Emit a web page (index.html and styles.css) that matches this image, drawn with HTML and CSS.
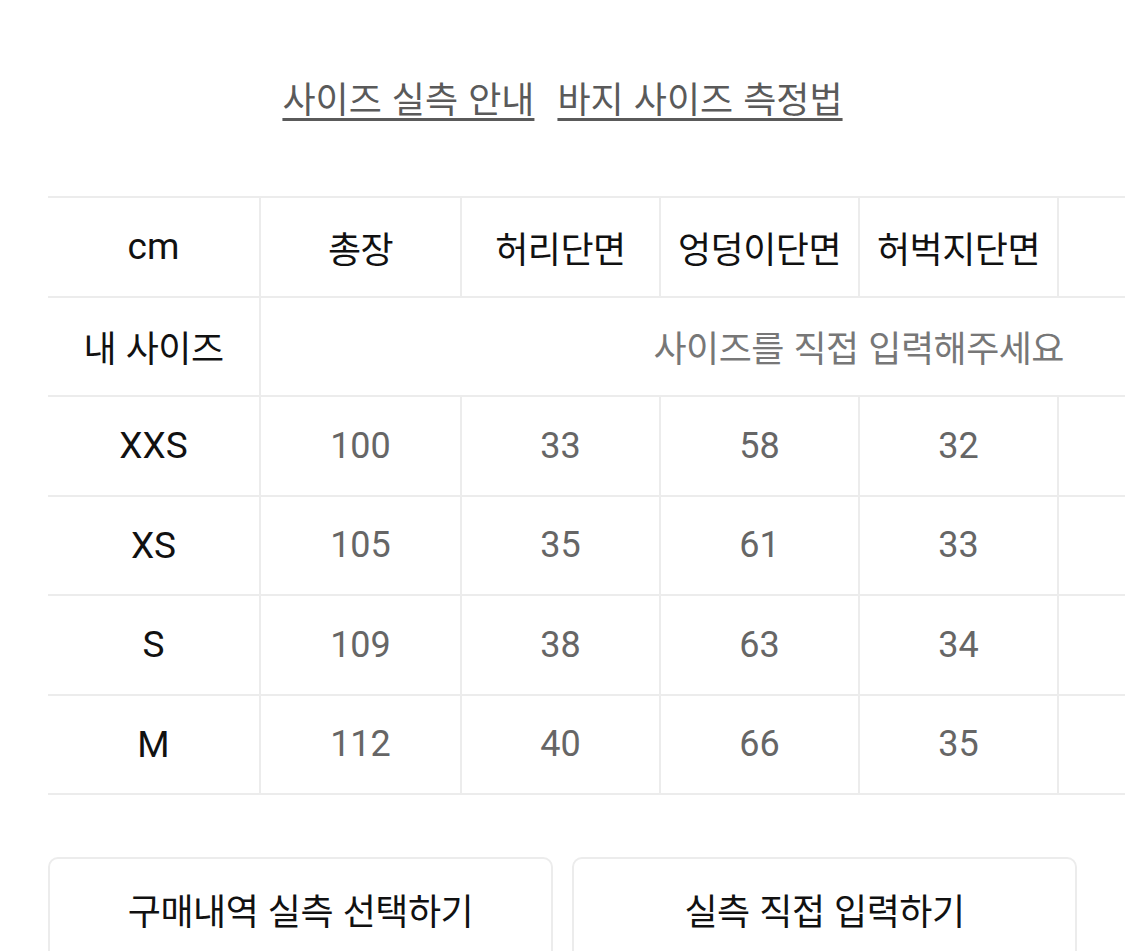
FILE: index.html
```html
<!DOCTYPE html>
<html lang="ko">
<head>
<meta charset="utf-8">
<title>사이즈</title>
<link rel="stylesheet" href="styles.css">
</head>
<body>
<div class="page">
  <nav class="guide-links">
    <a class="guide-link" href="#">사이즈 실측 안내</a>
    <a class="guide-link" href="#">바지 사이즈 측정법</a>
  </nav>

  <div class="table-wrap">
    <table class="size-table">
      <colgroup>
        <col class="c-first"><col class="c-mid"><col class="c-std"><col class="c-std"><col class="c-std"><col class="c-std">
      </colgroup>
      <thead>
        <tr>
          <th class="lat">cm</th>
          <th class="ko">총장</th>
          <th class="ko">허리단면</th>
          <th class="ko">엉덩이단면</th>
          <th class="ko">허벅지단면</th>
          <th></th>
        </tr>
      </thead>
      <tbody>
        <tr class="my-row">
          <th class="ko">내 사이즈</th>
          <td colspan="5" class="my-input"><span class="placeholder ko">사이즈를 직접 입력해주세요</span></td>
        </tr>
        <tr><th class="lat">XXS</th><td>100</td><td>33</td><td>58</td><td>32</td><td></td></tr>
        <tr><th class="lat">XS</th><td>105</td><td>35</td><td>61</td><td>33</td><td></td></tr>
        <tr><th class="lat">S</th><td>109</td><td>38</td><td>63</td><td>34</td><td></td></tr>
        <tr><th class="lat">M</th><td>112</td><td>40</td><td>66</td><td>35</td><td></td></tr>
      </tbody>
    </table>
  </div>

  <div class="actions">
    <button class="action-btn ko" type="button">구매내역 실측 선택하기</button>
    <button class="action-btn ko" type="button">실측 직접 입력하기</button>
  </div>
</div>
</body>
</html>
```

FILE: styles.css
```css
html, body {
  margin: 0;
  padding: 0;
  background: #ffffff;
  overflow: hidden;
}

body {
  font-family: Roboto, "Noto Sans CJK KR", sans-serif;
  color: #111111;
}

.page {
  padding: 0 48px;
  width: 1029px;
}

.ko {
  font-family: "Noto Sans CJK KR", sans-serif;
  letter-spacing: -0.5px;
}

.guide-links {
  display: flex;
  justify-content: center;
  gap: 23px;
  padding-top: 72px;
  height: 196px;
  box-sizing: border-box;
}

.guide-link {
  font-family: "Noto Sans CJK KR", sans-serif;
  letter-spacing: 0;
  font-size: 36px;
  line-height: 50px;
  height: 50px;
  color: #5a5a5a;
  text-decoration: underline;
  text-decoration-thickness: 3px;
  text-underline-offset: 5px;
  text-decoration-color: #5a5a5a;
}

.table-wrap {
  width: 1209px;
}

.size-table {
  border-collapse: collapse;
  table-layout: fixed;
  width: 1209px;
}

.c-first { width: 212px; }
.c-mid { width: 201px; }
.c-std { width: 199px; }

.size-table th,
.size-table td {
  height: 97.5px;
  padding: 0;
  text-align: center;
  vertical-align: middle;
  border: 2px solid #ececec;
  font-size: 36px;
  font-weight: 400;
  white-space: nowrap;
  overflow: hidden;
}

.size-table tr > :first-child {
  border-left: none;
}

.size-table th {
  color: #111111;
}

.size-table td {
  color: #666666;
}

.size-table .lat {
  font-family: Roboto, sans-serif;
  font-size: 37px;
}

.my-input {
  text-align: right !important;
  padding-right: 192px !important;
}

.placeholder {
  color: #777777;
  font-size: 36px;
}

.actions {
  display: flex;
  gap: 19px;
  margin-top: 62px;
}

.action-btn {
  flex: 1 1 0;
  height: 104px;
  background: #ffffff;
  border: 2px solid #ececec;
  border-radius: 10px;
  font-size: 36px;
  color: #111111;
  padding: 0;
  cursor: pointer;
}
```
